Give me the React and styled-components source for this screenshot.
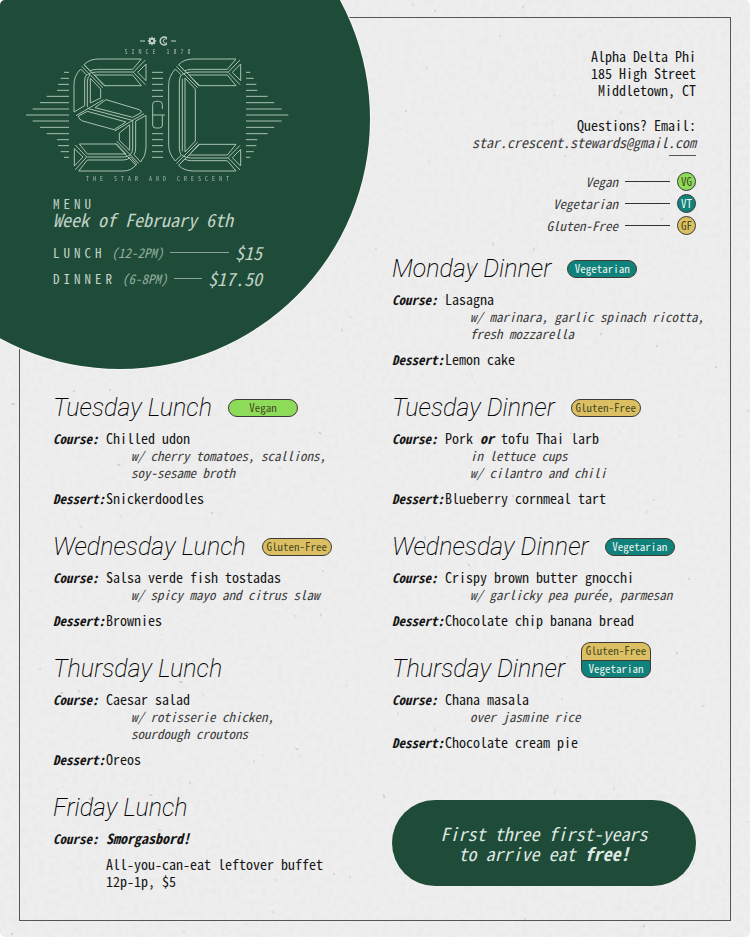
import React from "react";
import styled, { createGlobalStyle, css } from "styled-components";

const color = {
  paper: "#eeeeee",
  ink: "#161616",
  soft: "#3a3a3a",
  green: "#1f4c38",
  mint: "#c3d3c8",
  vegan: "#8edb5a",
  vegetarian: "#11827b",
  gluten: "#dcbf63",
};

const mono = `"Noto Sans Mono CJK JP", "Noto Sans Mono", "Liberation Mono", monospace`;

const GlobalStyle = createGlobalStyle`
  * { box-sizing: border-box; }
  body {
    margin: 0;
    background: #fff;
    color: ${color.ink};
    font-family: ${mono};
    font-size: 14px;
    line-height: 17px;
  }
  h1, h2, p, dl, dd, ul { margin: 0; padding: 0; font-weight: 400; }
`;

const Page = styled.main`
  position: relative;
  overflow: hidden;
  min-height: 100vh;
  padding: 17px 19px 16px;
  display: flex;
  border-radius: 5px;
  background: ${color.paper};
`;

const Texture = styled.svg`
  position: absolute;
  inset: 0;
  width: 100%;
  height: 100%;
  pointer-events: none;
`;

const Disc = styled.div`
  position: absolute;
  left: -130px;
  top: -131px;
  width: 500px;
  height: 500px;
  border-radius: 50%;
  background: ${color.green};
  box-shadow: 0 0 0 1px #f6f6f6;
`;

const Frame = styled.div`
  flex: 1;
  border: 1px solid #555;
  padding: 18px 34px 20px 33px;
`;

const Grid = styled.div`
  position: relative;
  z-index: 1;
  display: grid;
  grid-template-columns: 1fr 1fr;
  column-gap: 35px;
  row-gap: 26px;
`;

const Hero = styled.header`
  grid-row: span 2;
  color: ${color.mint};
`;

const Brand = styled.div`
  width: 265px;
  margin-left: -28px;
  display: flex;
  flex-direction: column;
  align-items: center;
`;

const Emblem = styled.svg`
  display: block;
  width: 36px;
  height: 10px;
`;

const Monogram = styled.svg`
  display: block;
  width: 265px;
  height: 115px;
  fill: none;
  stroke: #a9c1b2;
  stroke-width: 3;
  stroke-linejoin: round;
`;

const Tagline = styled.p`
  font-size: 6px;
  line-height: 12px;
  letter-spacing: 4px;
  padding-left: 4px;
  opacity: 0.8;
`;

const MenuTitle = styled.h1`
  margin-top: 12px;
  font-size: 13px;
  line-height: 13px;
  font-weight: 500;
  letter-spacing: 4px;
`;

const Week = styled.p`
  font-size: 18px;
  line-height: 18px;
  font-style: italic;
`;

const Prices = styled.ul`
  width: 209px;
  margin-top: 11px;
  list-style: none;
`;

const Price = styled.li`
  display: flex;
  align-items: center;
  gap: 6px;
  height: 26px;
`;

const PriceName = styled.span`
  font-size: 13px;
  letter-spacing: 4px;
`;

const Hours = styled.span`
  font-size: 13px;
  font-style: italic;
  color: #92ae9f;
`;

const Leader = styled.span`
  flex: ${(p) => (p.$fixed ? "0 0 45px" : "1")};
  height: 1px;
  background: ${(p) => (p.$dark ? "#333" : "#86a393")};
`;

const Amount = styled.span`
  font-size: 18px;
  font-style: italic;
`;

const Contact = styled.address`
  padding-top: 12px;
  margin-bottom: -6px;
  text-align: right;
  font-style: normal;
  display: flex;
  flex-direction: column;
  align-items: flex-end;
`;

const Question = styled.p`
  margin-top: 18px;
`;

const Email = styled.a`
  color: ${color.soft};
  font-style: italic;
  text-decoration: none;
`;

const Rule = styled.span`
  width: 27px;
  height: 1px;
  margin-top: 4px;
  background: #555;
`;

const Legend = styled.ul`
  margin-top: 16px;
  list-style: none;
  display: flex;
  flex-direction: column;
  gap: 3px;
`;

const LegendItem = styled.li`
  display: flex;
  align-items: center;
  justify-content: flex-end;
  gap: 7px;
  font-size: 13px;
  font-style: italic;
  color: ${color.soft};
`;

const diet = css`
  border: 1px solid #3b3b35;
  background: ${(p) => color[p.$kind]};
  color: ${(p) => (p.$kind === "vegetarian" ? "#f1f6f3" : "#45491f")};
`;

const Dot = styled.span`
  ${diet}
  width: 19px;
  height: 19px;
  border-radius: 50%;
  font-size: 11px;
  line-height: 16px;
  font-style: normal;
  text-align: center;
`;

const MealBox = styled.section`
  min-width: 0;
`;

const MealHead = styled.div`
  display: flex;
  align-items: center;
  gap: 16px;
  height: 28px;
  margin-bottom: 8px;
`;

const MealTitle = styled.h2`
  font-family: Roboto, "Open Sans", sans-serif;
  font-size: 25px;
  line-height: 28px;
  font-weight: 200;
  font-style: italic;
  white-space: nowrap;
  color: #000;
`;

const Badges = styled.div`
  height: 18px;
  display: flex;
  flex-direction: column;
  justify-content: flex-end;
`;

const Badge = styled.span`
  ${diet}
  flex: none;
  width: 70px;
  height: 18px;
  border-radius: 9px;
  font-size: 11px;
  line-height: 15px;
  text-align: center;
  &:not(:last-child) { border-radius: 9px 9px 0 0; border-bottom: 0; }
  &:not(:first-child) { border-radius: 0 0 9px 9px; }
`;

const Courses = styled.dl`
  display: grid;
  grid-template-columns: 53px 1fr;
  row-gap: 9px;
`;

const Label = styled.dt`
  font-size: 13px;
  font-weight: 700;
  font-style: italic;
`;

const Script = styled.em`
  font-weight: 700;
`;

const Detail = styled.p`
  margin-left: 25px;
  font-size: 13px;
  font-style: italic;
  white-space: nowrap;
  color: ${color.soft};
`;

const Extra = styled.p`
  margin-top: 9px;
`;

const Banner = styled.aside`
  align-self: start;
  margin-top: 6px;
  padding: 23px 20px;
  border-radius: 43px;
  background: ${color.green};
  color: #dfe8e2;
  font-size: 18px;
  line-height: 20px;
  font-style: italic;
  text-align: center;
`;

const dietName = {
  vegan: "Vegan",
  vegetarian: "Vegetarian",
  gluten: "Gluten-Free",
};

const legend = [
  ["vegan", "VG"],
  ["vegetarian", "VT"],
  ["gluten", "GF"],
];

const meals = [
  {
    title: "Monday Dinner",
    tags: ["vegetarian"],
    course: "Lasagna",
    details: ["w/ marinara, garlic spinach ricotta,", "fresh mozzarella"],
    dessert: "Lemon cake",
  },
  {
    title: "Tuesday Lunch",
    tags: ["vegan"],
    course: "Chilled udon",
    details: ["w/ cherry tomatoes, scallions,", "soy-sesame broth"],
    dessert: "Snickerdoodles",
  },
  {
    title: "Tuesday Dinner",
    tags: ["gluten"],
    course: (
      <>
        Pork <Script>or</Script> tofu Thai larb
      </>
    ),
    details: ["in lettuce cups", "w/ cilantro and chili"],
    dessert: "Blueberry cornmeal tart",
  },
  {
    title: "Wednesday Lunch",
    tags: ["gluten"],
    course: "Salsa verde fish tostadas",
    details: ["w/ spicy mayo and citrus slaw"],
    dessert: "Brownies",
  },
  {
    title: "Wednesday Dinner",
    tags: ["vegetarian"],
    course: "Crispy brown butter gnocchi",
    details: ["w/ garlicky pea purée, parmesan"],
    dessert: "Chocolate chip banana bread",
  },
  {
    title: "Thursday Lunch",
    tags: [],
    course: "Caesar salad",
    details: ["w/ rotisserie chicken,", "sourdough croutons"],
    dessert: "Oreos",
  },
  {
    title: "Thursday Dinner",
    tags: ["gluten", "vegetarian"],
    course: "Chana masala",
    details: ["over jasmine rice"],
    dessert: "Chocolate cream pie",
  },
  {
    title: "Friday Lunch",
    tags: [],
    course: <Script>Smorgasbord!</Script>,
    details: [],
    extra: ["All-you-can-eat leftover buffet", "12p-1p, $5"],
  },
];

function Meal({ title, tags, course, details, dessert, extra }) {
  return (
    <MealBox>
      <MealHead>
        <MealTitle>{title}</MealTitle>
        <Badges>
          {tags.map((t) => (
            <Badge key={t} $kind={t}>
              {dietName[t]}
            </Badge>
          ))}
        </Badges>
      </MealHead>
      <Courses>
        <Label>Course:</Label>
        <dd>
          {course}
          {details.map((d) => (
            <Detail key={d}>{d}</Detail>
          ))}
          {extra && (
            <Extra>
              {extra[0]}
              <br />
              {extra[1]}
            </Extra>
          )}
        </dd>
        {dessert && (
          <>
            <Label>Dessert:</Label>
            <dd>{dessert}</dd>
          </>
        )}
      </Courses>
    </MealBox>
  );
}

const rays = [
  [158, 192], [176, 182], [194, 174], [212, 171], [230, 140],
  [249, 120], [268, 98], [286, 78], [304, 98], [323, 120],
  [342, 140], [360, 171], [378, 174], [396, 182], [413, 192],
];

const rungs = [158, 176, 194, 212, 230, 342, 360, 378, 396, 413];

const topArm =
  "M252 135Q268 118 296 118H424L398 149H290Q278 149 270 154ZM262 165Q272 157 290 157H400M283 166H398L424 198H312ZM438 133L413 158 438 183ZM436 121L400 158 436 195M245 140L309 204M252 135L316 199";

const letterS =
  "M242 148Q222 168 222 195V277L254 258V184Q254 170 260 166ZM262 262V187Q262 172 270 166M271 250V176L302 208V235ZM285 264L318 240 418 270Q428 274 422 280L398 293ZM262 266L400 303M235 289L262 275 378 307 342 330 248 304Q236 300 235 289ZM228 288L310 240M344 334L432 282M438 287V385Q438 408 422 427L402 405Q407 397 407 385V304ZM398 305V385Q398 412 370 412H262M358 340L389 315V392L358 362ZM238 373H350L378 403H262ZM236 454L262 421H370Q384 421 392 412L410 433Q395 454 370 454ZM223 387L249 412 223 439ZM226 376L260 412 226 450M350 364L416 431M345 371L408 437";

const letterCSpine =
  "M526 148Q506 170 506 195V377Q506 402 526 424L544 406Q538 398 538 385V187Q538 174 544 166ZM547 395V177M555 397V175L586 208V364Z";

function Logo() {
  return (
    <Brand>
      <Emblem viewBox="0 0 36 10" fill="none" stroke={color.mint} aria-hidden="true">
        <path d="M0 5h5M31 5h5" />
        <circle cx="12" cy="5" r="2.2" strokeWidth="1.8" />
        <path d="M12 .8v2M12 7.200v2M7.800 5h2M14.200 5h2M9 2l1.500 1.500M13.500 6.500l1.500 1.500M15 2l-1.500 1.500M10.500 6.500l-1.500 1.500" strokeWidth="1.4" />
        <path d="M27 2.200A4 4 0 1 0 27 7.800" strokeWidth="1.4" />
        <path d="M27 3.400A2.200 2.200 0 1 0 27 6.600" />
      </Emblem>
      <Tagline>SINCE 1878</Tagline>
      <Monogram viewBox="75 115 795 345" role="img" aria-label="S and C monogram">
        <path d={topArm} />
        <path d={letterS} />
        <g transform="translate(284)">
          <path d={topArm} />
        </g>
        <g transform="matrix(1 0 0 -1 284 572)">
          <path d={topArm} />
        </g>
        <path d={letterCSpine} />
        <path d={rays.map(([y, x]) => `M${x} ${y}H207M738 ${y}H${943 - x}`).join("")} />
        <path d={rungs.map((y) => `M456 ${y}H489`).join("")} />
        <path d="M487 268V255Q487 245 478 245H467Q458 245 458 255V316Q458 325 467 325H478Q487 325 487 316V286M458 286H495" />
      </Monogram>
      <Tagline>THE STAR AND CRESCENT</Tagline>
    </Brand>
  );
}

const specks = Array.from({ length: 150 }, (_, i) => ({
  x: (i * 197 + ((i * i * 31) % 83)) % 750,
  y: (i * 331 + ((i * i * 17) % 97)) % 937,
  r: 1 + (i % 3) / 2,
  o: 0.08 + (i % 5) * 0.04,
  a: (i * 47) % 180,
}));

export default function App() {
  return (
    <>
      <GlobalStyle />
      <Page>
        <Texture aria-hidden="true" viewBox="0 0 750 937" preserveAspectRatio="xMidYMid slice">
          <filter id="grain">
            <feTurbulence type="fractalNoise" baseFrequency="0.18" numOctaves="3" seed="4" />
            <feColorMatrix values="0 0 0 0 0.3  0 0 0 0 0.3  0 0 0 0 0.3  0.5 0 0 0 -0.19" />
          </filter>
          <rect width="750" height="937" filter="url(#grain)" opacity="0.2" />
          {specks.map((s, i) => (
            <ellipse
              key={i}
              rx={s.r}
              ry="0.7"
              fill="#555"
              opacity={s.o}
              transform={`translate(${s.x} ${s.y}) rotate(${s.a})`}
            />
          ))}
        </Texture>
        <Frame>
          <Disc />
          <Grid>
            <Hero>
              <Logo />
              <MenuTitle>MENU</MenuTitle>
              <Week>Week of February 6th</Week>
              <Prices>
                <Price>
                  <PriceName>LUNCH</PriceName>
                  <Hours>(12-2PM)</Hours>
                  <Leader />
                  <Amount>$15</Amount>
                </Price>
                <Price>
                  <PriceName>DINNER</PriceName>
                  <Hours>(6-8PM)</Hours>
                  <Leader />
                  <Amount>$17.50</Amount>
                </Price>
              </Prices>
            </Hero>
            <Contact>
              <p>
                Alpha Delta Phi
                <br />
                185 High Street
                <br />
                Middletown, CT
              </p>
              <Question>Questions? Email:</Question>
              <Email href="mailto:star.crescent.stewards@gmail.com">
                star.crescent.stewards@gmail.com
              </Email>
              <Rule />
              <Legend>
                {legend.map(([kind, code]) => (
                  <LegendItem key={kind}>
                    {dietName[kind]}
                    <Leader $fixed $dark />
                    <Dot $kind={kind}>{code}</Dot>
                  </LegendItem>
                ))}
              </Legend>
            </Contact>
            {meals.map((m) => (
              <Meal key={m.title} {...m} />
            ))}
            <Banner>
              First three first-years
              <br />
              to arrive eat <Script>free!</Script>
            </Banner>
          </Grid>
        </Frame>
      </Page>
    </>
  );
}
